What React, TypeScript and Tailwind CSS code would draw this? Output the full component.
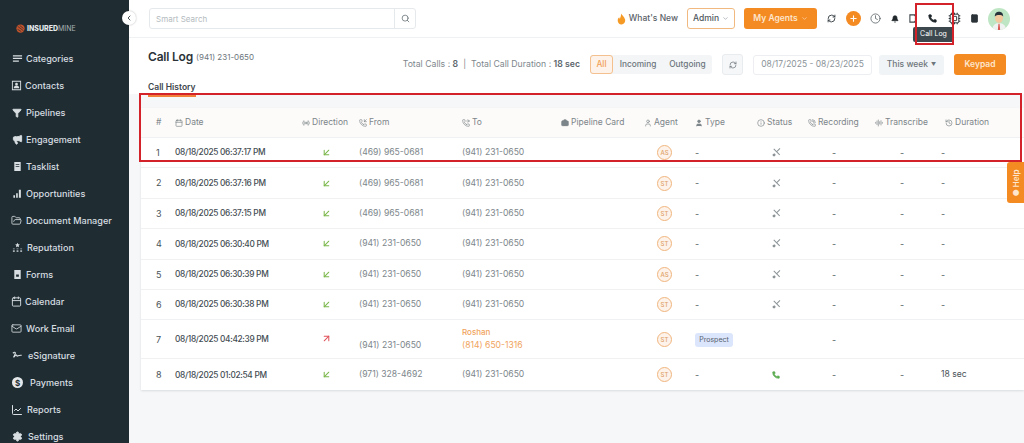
import {
  ArrowDownLeft,
  ArrowUpRight,
  Bell,
  Calendar,
  ChevronDown,
  ChevronLeft,
  Clock,
  Cpu,
  Filter,
  FolderOpen,
  History,
  Info,
  Mail,
  Megaphone,
  Phone,
  PhoneCall,
  PhoneForwarded,
  PhoneIncoming,
  Plus,
  RefreshCw,
  Search,
  Settings,
  User,
  Radio,
  Briefcase,
  AudioLines,
  Tablet,
  ChartLine,
} from "lucide-react";
import type { ReactNode } from "react";

const font = "font-['Inter','Liberation_Sans',sans-serif]";

function Glyph({ children }: { children: ReactNode }) {
  return (
    <svg viewBox="0 0 12 12" className="h-[11px] w-[11px] shrink-0" fill="currentColor">
      {children}
    </svg>
  );
}

const navItems: { label: string; icon: ReactNode; pl: string; gap: string }[] = [
  {
    label: "Categories",
    icon: <Glyph><path d="M1 2.500h10v1.300H1zM1 5.300h10v1.300H1zM1 8.200h6.500v1.300H1z" /></Glyph>,
    pl: "pl-[12px]",
    gap: "gap-[3px]",
  },
  {
    label: "Contacts",
    icon: <Glyph><path fillRule="evenodd" d="M1 .8h10v10.400H1zM2 1.800v8.400h8V1.800zM6 3a1.500 1.500 0 1 1 0 3 1.500 1.500 0 0 1 0-3zM3 9c0-2 1.300-2.600 3-2.600S9 7 9 9z" /></Glyph>,
    pl: "pl-[11px]",
    gap: "gap-[3px]",
  },
  {
    label: "Pipelines",
    icon: <Filter className="h-[10px] w-[10px] shrink-0 fill-current" strokeWidth={2} />,
    pl: "pl-[12px]",
    gap: "gap-[4px]",
  },
  {
    label: "Engagement",
    icon: <Megaphone className="h-[11px] w-[11px] shrink-0 fill-current" strokeWidth={2} />,
    pl: "pl-[12px]",
    gap: "gap-[3px]",
  },
  {
    label: "Tasklist",
    icon: <Glyph><path fillRule="evenodd" d="M2.500 1h7v10h-7zM4 3.500v.8h4v-.8zM4 5.500v.8h4v-.8z" /></Glyph>,
    pl: "pl-[12px]",
    gap: "gap-[3px]",
  },
  {
    label: "Opportunities",
    icon: <Glyph><path d="M1.500 8h1.800v2.500H1.500zM4.500 5.800h1.800v4.700H4.500zM7.500 2h2.200v8.500H7.500z" /></Glyph>,
    pl: "pl-[12px]",
    gap: "gap-[3px]",
  },
  {
    label: "Document Manager",
    icon: <FolderOpen className="h-[11px] w-[11px] shrink-0" strokeWidth={1.800} />,
    pl: "pl-[11px]",
    gap: "gap-[4px]",
  },
  {
    label: "Reputation",
    icon: (
      <Glyph>
        <path d="M6 .8l.8 1.700 1.800.2-1.300 1.200.3 1.800L6 4.800l-1.600.9.300-1.800L3.400 2.700l1.800-.2z" />
        <path d="M1 7h2v1H1zM5 7h2v1H5zM9 7h2v1H9zM1 9h2v2H1zM5 9h2v2H5zM9 9h2v2H9z" opacity="0.75" />
      </Glyph>
    ),
    pl: "pl-[12px]",
    gap: "gap-[4px]",
  },
  {
    label: "Forms",
    icon: <Glyph><path fillRule="evenodd" d="M2.500 1h7v10h-7zM4.500 6v2.500h3V6z" /></Glyph>,
    pl: "pl-[12px]",
    gap: "gap-[3px]",
  },
  {
    label: "Calendar",
    icon: <Calendar className="h-[11px] w-[11px] shrink-0" strokeWidth={2} />,
    pl: "pl-[11px]",
    gap: "gap-[3px]",
  },
  {
    label: "Work Email",
    icon: <Mail className="h-[11px] w-[11px] shrink-0" strokeWidth={1.800} />,
    pl: "pl-[11px]",
    gap: "gap-[4px]",
  },
  {
    label: "eSignature",
    icon: <Glyph><path d="M1 3.500c1.500-1.500 3-1.500 2.500.5-.3 1.500-1.500 3.500-1.800 4 1.300-1 2.300-3 3.300-2.500.5.300 0 1.200.8 1.200.9 0 1.700-1.400 4.700-.9" fill="none" stroke="currentColor" strokeWidth="1.300" /></Glyph>,
    pl: "pl-[12px]",
    gap: "gap-[5px]",
  },
  {
    label: "Payments",
    icon: <span className="flex h-[11px] w-[11px] shrink-0 items-center justify-center rounded-full bg-[#e4e8ea] text-[8px] font-bold text-[#1f2d33]">$</span>,
    pl: "pl-[12px]",
    gap: "gap-[7px]",
  },
  {
    label: "Reports",
    icon: <ChartLine className="h-[12px] w-[12px] shrink-0" strokeWidth={2} />,
    pl: "pl-[11px]",
    gap: "gap-[4px]",
  },
  {
    label: "Settings",
    icon: <Settings className="h-[11px] w-[11px] shrink-0 fill-current" strokeWidth={2} />,
    pl: "pl-[12px]",
    gap: "gap-[5px]",
  },
];

const columns = [
  { label: "#", w: "w-[34px] pl-[15px]" },
  { label: "Date", icon: Calendar, w: "w-[127px]" },
  { label: "Direction", icon: Radio, w: "w-[57px]" },
  { label: "From", icon: PhoneIncoming, w: "w-[103px]" },
  { label: "To", icon: PhoneForwarded, w: "w-[99px]" },
  { label: "Pipeline Card", icon: Briefcase, w: "w-[83px]", fill: true },
  { label: "Agent", icon: User, w: "w-[51px]" },
  { label: "Type", icon: User, w: "w-[62px]", fill: true },
  { label: "Status", icon: Info, w: "w-[51px]" },
  { label: "Recording", icon: PhoneCall, w: "w-[67px]" },
  { label: "Transcribe", icon: AudioLines, w: "w-[70px]" },
  { label: "Duration", icon: History, w: "w-[79px]" },
];

const rows = [
  { n: 1, date: "08/18/2025 06:37:17 PM", from: "(469) 965-0681", to: "(941) 231-0650", agent: "AS" },
  { n: 2, date: "08/18/2025 06:37:16 PM", from: "(469) 965-0681", to: "(941) 231-0650", agent: "ST" },
  { n: 3, date: "08/18/2025 06:37:15 PM", from: "(469) 965-0681", to: "(941) 231-0650", agent: "ST" },
  { n: 4, date: "08/18/2025 06:30:40 PM", from: "(941) 231-0650", to: "(941) 231-0650", agent: "ST" },
  { n: 5, date: "08/18/2025 06:30:39 PM", from: "(941) 231-0650", to: "(941) 231-0650", agent: "AS" },
  { n: 6, date: "08/18/2025 06:30:38 PM", from: "(941) 231-0650", to: "(941) 231-0650", agent: "ST" },
];

const dateCls = "w-[127px] shrink-0 text-[8.300px] font-medium tracking-[-0.3px] whitespace-nowrap text-[#444d53]";
const phoneCls = "text-[8.600px] text-[#7d868b]";

function Dash() {
  return <span className="text-[#555f66]">-</span>;
}

function AgentBadge({ name }: { name: string }) {
  return (
    <span className="flex h-[15px] w-[15px] items-center justify-center rounded-full border border-[#f0b57e] bg-[#fdf3ea] text-[6px] font-medium text-[#e0a067]">
      {name}
    </span>
  );
}

function MissedIcon() {
  return (
    <svg viewBox="0 0 12 12" className="h-[11px] w-[11px]" fill="none" stroke="#8b9397" strokeWidth="1.100">
      <path d="M3 2l6.500 6.500M9.800 1.500L6.300 5" />
      <path d="M1.500 8.500c1-1.200 2.400-1.600 3-1.200l.6 1.300-1.200 1.600c-1.200.2-2-.6-2.400-1.700z" fill="#8b9397" stroke="none" />
    </svg>
  );
}

function Sidebar() {
  return (
    <aside className="flex h-[443px] w-[129px] shrink-0 flex-col overflow-hidden bg-[#1f2d33] text-[#d8dee1]">
      <div className="flex h-[45px] shrink-0 items-end gap-[2px] pb-[11px] pl-[16px]">
        <svg viewBox="0 0 12 12" className="mb-[1px] h-[9px] w-[9px]">
          <circle cx="6" cy="6" r="5.500" fill="#c4522a" />
          <path d="M2 3l8 6M2 7l5 3M5 2l5 4" stroke="#1f2d33" strokeWidth="0.900" />
        </svg>
        <span className="text-[7px] leading-[11px] font-extrabold text-[#e5e9eb]">
          INSURED<span className="font-normal text-[#a9b2b6]">MINE</span>
        </span>
      </div>
      <nav className="flex flex-col">
        {navItems.map((item) => (
          <div key={item.label} className={`flex h-[27px] shrink-0 items-center ${item.pl} ${item.gap}`}>
            {item.icon}
            <span className="text-[9.100px] font-medium whitespace-nowrap">{item.label}</span>
          </div>
        ))}
      </nav>
    </aside>
  );
}

function Topbar() {
  return (
    <header className="flex h-[38px] shrink-0 items-center border-b border-[#eff1f3] bg-white pr-[14px] pl-[20px]">
      <div className="flex h-[21px] w-[267px] items-center rounded-[3px] border border-[#e6e9ec]">
        <span className="flex-1 pl-[6px] text-[8px] text-[#b4bbc0]">Smart Search</span>
        <span className="flex h-full w-[21px] items-center justify-center border-l border-[#e6e9ec] text-[#5f6a70]">
          <Search className="h-[9px] w-[9px]" strokeWidth={2} />
        </span>
      </div>
      <div className="ml-auto flex items-center">
        <svg viewBox="0 0 10 12" className="mr-[3px] h-[12px] w-[9px]" fill="#f59a25">
          <path d="M4.500 0c1 2 3.500 3.500 4.500 6.500.6 3-1.500 5.500-4 5.500S.500 10 .800 7c.2-1.500 1-2.500 1.700-3 0 1 .3 1.500.8 1.800C3.800 4 4.800 2 4.500 0z" />
        </svg>
        <span className="mr-[9px] text-[8.500px] font-medium text-[#5a6268]">What's New</span>
        <div className="mr-[9px] flex h-[21px] w-[48px] items-center justify-center gap-[3px] rounded-[3px] border border-[#f1b980] text-[8.500px] font-medium text-[#4d565c]">
          Admin <ChevronDown className="h-[7px] w-[7px] text-[#8b9397]" />
        </div>
        <div className="mr-[10px] flex h-[21px] w-[73px] items-center justify-center gap-[3px] rounded-[3px] bg-[#f48a22] text-[8.500px] font-semibold text-[#fde6cd]">
          My Agents <ChevronDown className="h-[7px] w-[7px]" />
        </div>
        <RefreshCw className="mr-[10px] h-[9px] w-[9px] text-[#2f383d]" strokeWidth={2.400} />
        <span className="mr-[9px] flex h-[15px] w-[15px] items-center justify-center rounded-full bg-[#f48a22]">
          <Plus className="h-[9px] w-[9px] text-white" strokeWidth={3} />
        </span>
        <Clock className="mr-[10px] h-[11px] w-[11px] text-[#4a5358]" strokeWidth={1.600} />
        <Bell className="mr-[10px] h-[8px] w-[8px] fill-[#1f272b] text-[#1f272b]" />
        <svg viewBox="0 0 10 10" className="mr-[10px] h-[9px] w-[9px]" fill="none" stroke="#3b4449" strokeWidth="1.200">
          <path d="M6.500 2.500V1H1v8h5.500V7.500" />
          <path d="M6.500 3.500L9 5 6.500 6.500z" fill="#3b4449" stroke="none" />
        </svg>
        <Phone className="mr-[11px] h-[9px] w-[9px] fill-[#1f272b] text-[#1f272b]" />
        <Cpu className="mr-[9px] h-[13px] w-[13px] text-[#2f383d]" strokeWidth={1.800} />
        <Tablet className="mr-[9px] h-[9px] w-[9px] fill-[#2b3338] text-[#2b3338]" />
        <span className="flex h-[22px] w-[22px] items-center justify-center overflow-hidden rounded-full bg-[#bfe6c4]">
          <svg viewBox="0 0 21 21" className="h-[22px] w-[22px]">
            <path d="M4 21c.5-5 3-6.500 6.500-6.500S17 16 17 21z" fill="#f0f2f2" />
            <path d="M10 15h1l.6 6H9.400z" fill="#d9534f" />
            <ellipse cx="10.500" cy="9.500" rx="3.800" ry="4.700" fill="#f3c9a0" />
            <path d="M6.500 8c0-3.500 2-4.500 4-4.500s4 1 4 4.500c-1.500-1.800-6-1.800-8 0z" fill="#27323a" />
          </svg>
        </span>
      </div>
    </header>
  );
}

function Toolbar() {
  return (
    <section className="flex h-[43px] shrink-0 items-start bg-white pr-[18px] pl-[19px]">
      <div className="flex items-center gap-[3px] pt-[11px]">
        <h1 className="text-[12px] leading-[16px] font-semibold tracking-[-0.2px] text-[#2b3338]">Call Log</h1>
        <span className="text-[8px] font-normal text-[#6d767c]">(941) 231-0650</span>
      </div>
      <div className="ml-auto flex items-center pt-[16px]">
        <span className="mr-[10px] text-[8.700px] text-[#7e878c]">
          Total Calls : <b className="font-semibold text-[#5d666b]">8</b>
          <span className="mx-[5px]">|</span>
          Total Call Duration : <b className="font-semibold text-[#5d666b]">18 sec</b>
        </span>
        <div className="mr-[10px] flex h-[19px] items-center rounded-[3px] bg-[#f3f5f7] text-[8.300px] font-medium text-[#6d767c]">
          <span className="flex h-full w-[23px] items-center justify-center rounded-[3px] border border-[#f4c08d] bg-[#fdf3ea] text-[#f2a258]">All</span>
          <span className="flex w-[50px] justify-center">Incoming</span>
          <span className="flex w-[49px] justify-center">Outgoing</span>
        </div>
        <span className="mr-[10px] flex h-[21px] w-[21px] items-center justify-center rounded-[3px] border border-[#e9ecef] bg-[#f5f7f9]">
          <RefreshCw className="h-[8px] w-[8px] text-[#6d767c]" strokeWidth={2.200} />
        </span>
        <span className="mr-[7px] flex h-[20px] w-[119px] items-center justify-center rounded-[3px] border border-[#eceef1] text-[8.500px] text-[#8b9398]">
          08/17/2025 - 08/23/2025
        </span>
        <span className="mr-[10px] flex h-[20px] w-[65px] items-center justify-center gap-[3px] rounded-[3px] bg-[#f1f4f6] text-[8.500px] font-medium text-[#6d767c]">
          This week <span className="text-[5px]">▼</span>
        </span>
        <span className="flex h-[21px] w-[52px] items-center justify-center rounded-[3px] bg-[#f48a22] text-[8.500px] font-semibold text-[#fde6cd]">
          Keypad
        </span>
      </div>
    </section>
  );
}

function CallTable() {
  return (
    <div className="ml-[12px] bg-white shadow-[0_1px_2px_rgba(30,45,51,0.12)]">
      <div className="flex h-[30px] items-center border-b border-[#f0f1f3] bg-[#fdfbf9] text-[8.500px] text-[#7c858a]">
        {columns.map((col) => (
          <div key={col.label} className={`flex shrink-0 items-center gap-[2px] whitespace-nowrap ${col.w}`}>
            {col.icon && <col.icon className={`h-[8px] w-[8px] shrink-0 ${col.fill ? "fill-current" : ""}`} strokeWidth={2} />}
            {col.label}
          </div>
        ))}
      </div>
      {rows.map((r) => (
        <div key={r.n} className="flex h-[30.400px] items-center border-b border-[#f0f1f3] text-[9px]">
          <div className="w-[34px] shrink-0 pl-[15px] text-[#4a5358]">{r.n}</div>
          <div className={dateCls}>{r.date}</div>
          <div className="w-[57px] shrink-0 pl-[19px]"><ArrowDownLeft className="h-[11px] w-[11px] text-[#7ab648]" strokeWidth={2.200} /></div>
          <div className={`w-[103px] shrink-0 ${phoneCls}`}>{r.from}</div>
          <div className={`w-[182px] shrink-0 ${phoneCls}`}>{r.to}</div>
          <div className="w-[51px] shrink-0 pl-[13px]"><AgentBadge name={r.agent} /></div>
          <div className="w-[62px] shrink-0"><Dash /></div>
          <div className="w-[51px] shrink-0 pl-[14px]"><MissedIcon /></div>
          <div className="w-[67px] shrink-0 pl-[24px]"><Dash /></div>
          <div className="w-[66px] shrink-0 pl-[25px]"><Dash /></div>
          <div className="w-[83px] shrink-0"><Dash /></div>
        </div>
      ))}
      <div className="flex h-[39px] items-center border-b border-[#f0f1f3] text-[9px]">
        <div className="w-[34px] shrink-0 pl-[15px] text-[#4a5358]">7</div>
        <div className={dateCls}>08/18/2025 04:42:39 PM</div>
        <div className="w-[57px] shrink-0 pb-[2px] pl-[19px]"><ArrowUpRight className="h-[11px] w-[11px] text-[#e0525a]" strokeWidth={2.200} /></div>
        <div className={`w-[103px] shrink-0 pt-[13px] ${phoneCls}`}>(941) 231-0650</div>
        <div className="w-[182px] shrink-0 text-[8.600px] leading-[13px] text-[#f0a35c]">
          <div className="text-[8px] font-medium">Roshan</div>
          <div>(814) 650-1316</div>
        </div>
        <div className="w-[51px] shrink-0 pl-[13px]"><AgentBadge name="ST" /></div>
        <div className="w-[62px] shrink-0">
          <span className="inline-flex h-[14px] w-[38px] items-center justify-center rounded-[3px] bg-[#dbe5fb] text-[7px] text-[#56626c]">Prospect</span>
        </div>
        <div className="w-[51px] shrink-0" />
        <div className="w-[67px] shrink-0 pl-[24px]"><Dash /></div>
      </div>
      <div className="flex h-[31px] items-center text-[9px]">
        <div className="w-[34px] shrink-0 pl-[15px] text-[#4a5358]">8</div>
        <div className={dateCls}>08/18/2025 01:02:54 PM</div>
        <div className="w-[57px] shrink-0 pl-[19px]"><ArrowDownLeft className="h-[11px] w-[11px] text-[#7ab648]" strokeWidth={2.200} /></div>
        <div className={`w-[103px] shrink-0 ${phoneCls}`}>(971) 328-4692</div>
        <div className={`w-[182px] shrink-0 ${phoneCls}`}>(941) 231-0650</div>
        <div className="w-[51px] shrink-0 pl-[13px]"><AgentBadge name="ST" /></div>
        <div className="w-[62px] shrink-0"><Dash /></div>
        <div className="w-[51px] shrink-0 pl-[15px]"><Phone className="h-[8px] w-[8px] fill-[#5fae55] text-[#5fae55]" /></div>
        <div className="w-[67px] shrink-0 pl-[24px]"><Dash /></div>
        <div className="w-[66px] shrink-0 pl-[25px]"><Dash /></div>
        <div className="w-[83px] shrink-0 text-[8.600px] text-[#4a5358]">18 sec</div>
      </div>
    </div>
  );
}

export default function App() {
  return (
    <div className={`relative flex h-[443px] w-[1024px] overflow-hidden bg-white ${font}`}>
      <Sidebar />
      <main className="flex min-w-0 flex-1 flex-col">
        <Topbar />
        <Toolbar />
        <div className="flex h-[13px] shrink-0 flex-col bg-white pl-[19px]">
          <span className="relative z-10 w-fit shrink-0 border-b-2 border-[#f2803a] pb-[2px] text-[8.500px] leading-[12px] font-semibold text-[#3d464c]">
            Call History
          </span>
        </div>
        <div className="flex-1 bg-[#f5f7f9] pt-[14px]">
          <CallTable />
        </div>
      </main>

      {/* collapse handle */}
      <span className="absolute top-[11px] left-[122px] flex h-[14px] w-[14px] items-center justify-center rounded-full bg-white shadow-[0_0_2px_rgba(0,0,0,0.3)]">
        <ChevronLeft className="h-[8px] w-[8px] text-[#4a5358]" strokeWidth={3} />
      </span>

      {/* help tab */}
      <span className="absolute top-[162px] right-0 flex h-[41px] w-[17px] items-center justify-center rounded-l-[3px] bg-[#f48a22]">
        <span className="rotate-[-90deg] text-[8px] font-semibold whitespace-nowrap text-[#fde6cd]">● Help</span>
      </span>

      {/* tooltip */}
      <span className="absolute top-[27px] left-[913px] flex h-[15px] w-[41px] items-center justify-center rounded-[2px] bg-[#3d474e] text-[7px] text-white">
        Call Log
      </span>

      {/* red annotations from the screenshot */}
      <span className="absolute top-[3px] left-[915px] h-[42px] w-[39px] border-2 border-[#d3222a]" />
      <span className="absolute top-[93px] left-[139px] h-[69px] w-[883px] border-2 border-[#d3222a]" />
    </div>
  );
}
